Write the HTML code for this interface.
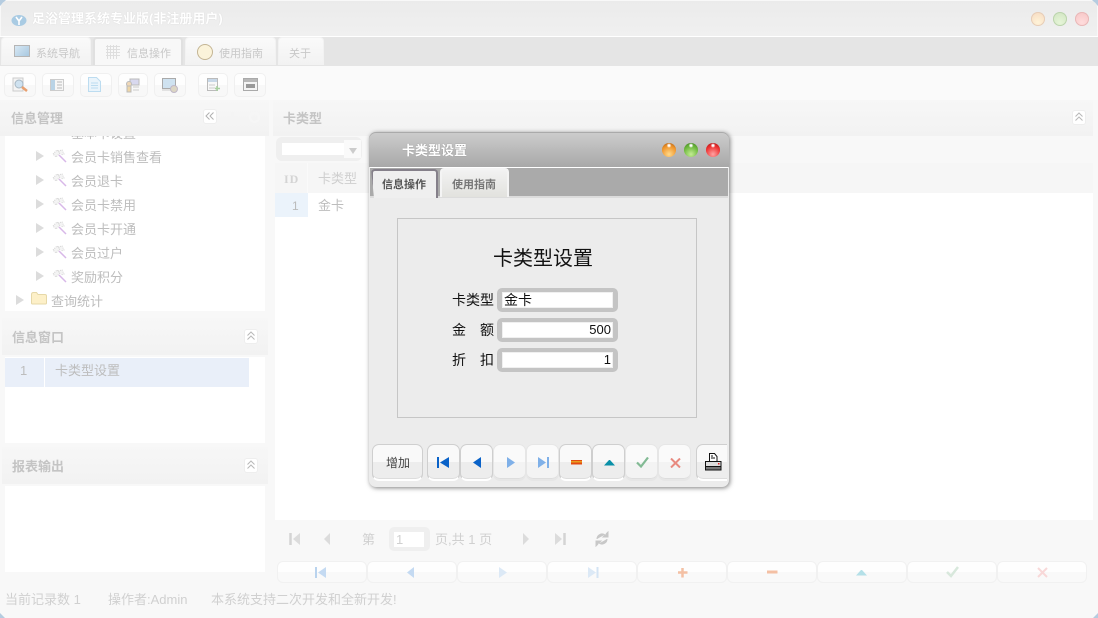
<!DOCTYPE html>
<html><head><meta charset="utf-8">
<style>
html,body{margin:0;padding:0;width:1098px;height:618px;overflow:hidden;background:#f8f8f8}
body{font-family:"Liberation Sans","WenQuanYi Zen Hei","Noto Sans CJK SC",sans-serif;font-size:13px;position:relative}
.a,.t,.btn,svg.i{position:absolute}
.t{white-space:nowrap;line-height:16px}
.tab{position:absolute;top:37px;height:28px;background:linear-gradient(#fafafa,#f2f2f2);border-radius:4px 4px 0 0;border:1px solid #f2f2f2;border-bottom:0;box-sizing:border-box}
.tb{position:absolute;top:73px;height:24px;box-sizing:border-box;border:1px solid #f0f0f0;border-radius:5px;background:linear-gradient(#fefefe 50%,#f8f8f8 50%)}
.hd{position:absolute;background:linear-gradient(#f7f7f7,#f2f2f2)}
.up{position:absolute;width:14px;height:15px;background:#fff;border:1px solid #eee;border-radius:3px;box-sizing:border-box}
.tri{position:absolute;width:0;height:0;border-left:8px solid #dcdcdc;border-top:5px solid transparent;border-bottom:5px solid transparent}
.tx{color:#bdbdbd;font-size:13px}
.btn{top:444px;height:37px;box-sizing:border-box;border:1px solid #cfcfcf;border-radius:7px;background:linear-gradient(#f9f9f9 50%,#ededed 50%);border-bottom:2px solid #fff;box-shadow:inset 0 -1px 0 #ddd}
.btn.d{background:linear-gradient(#fafafa 50%,#f3f3f3 50%);border-color:#e6e6e6}
.b2{position:absolute;top:561px;width:90px;height:22px;box-sizing:border-box;border:1px solid #f1f1f1;border-radius:6px;background:linear-gradient(#fefefe 50%,#f9f9f9 50%)}
.inp{position:absolute;left:497px;width:121px;height:24px;box-sizing:border-box;background:#c4c4c4;border-radius:5px;padding:4px 5px}
.inp div{background:#fff;height:16px;line-height:16px;font-size:13px;color:#111;box-shadow:inset 0 0 0 1px #f0f0f0;padding:0 2px;white-space:nowrap}
.dot{position:absolute;width:14px;height:14px;border-radius:50%}
</style></head><body>

<!-- window corners -->
<div class="a" style="left:0;top:0;width:6px;height:6px;background:#b5cce0;clip-path:polygon(0 0,100% 0,0 100%)"></div>
<div class="a" style="right:0;top:0;width:6px;height:6px;background:#b5cce0;clip-path:polygon(0 0,100% 0,100% 100%)"></div>
<div class="a" style="left:0;bottom:0;width:5px;height:5px;background:#b5cce0;clip-path:polygon(0 0,100% 100%,0 100%)"></div>
<div class="a" style="right:0;bottom:0;width:5px;height:5px;background:#b5cce0;clip-path:polygon(100% 0,100% 100%,0 100%)"></div>

<!-- title bar -->
<div class="a" style="left:1px;top:1px;width:1096px;height:35px;background:linear-gradient(#ebebeb,#f0f0f0);border-radius:6px 6px 0 0"></div>
<div class="a" style="left:0;top:36px;width:1098px;height:1px;background:#fff"></div>
<svg class="i" style="left:10px;top:13px" width="18" height="14"><ellipse cx="9" cy="7.500" rx="7.500" ry="5.500" fill="#a9cbe3"/><path d="M6 4l3 4 3-4M9 8v4" stroke="#fff" stroke-width="1.600" fill="none"/></svg>
<div class="t" style="left:32px;top:11px;color:#fff;font-weight:bold;font-size:13px;text-shadow:0 0 1px #ccc">足浴管理系统专业版(非注册用户)</div>
<div class="dot" style="left:1031px;top:12px;background:radial-gradient(circle at 50% 75%,#fff3d8,#f5d9c0);box-shadow:inset 0 0 0 1px #e6cdb8"></div>
<div class="dot" style="left:1053px;top:12px;background:radial-gradient(circle at 50% 75%,#e6f5d8,#cfe3c0);box-shadow:inset 0 0 0 1px #bcd4ae"></div>
<div class="dot" style="left:1075px;top:12px;background:radial-gradient(circle at 50% 75%,#ffdcdc,#f5c4c4);box-shadow:inset 0 0 0 1px #e8b8b8"></div>

<!-- tab strip -->
<div class="a" style="left:0;top:37px;width:1098px;height:29px;background:#e5e5e5"></div>
<div class="tab" style="left:1px;width:90px"></div>
<div class="tab" style="left:93px;width:90px;border:2px solid #e0e0e0;border-bottom:0;background:#f8f8f8"></div>
<div class="tab" style="left:185px;width:91px"></div>
<div class="tab" style="left:278px;width:46px"></div>
<div class="a" style="left:14px;top:45px;width:14px;height:10px;background:linear-gradient(135deg,#d8e8f4,#a8c8e0);border:1px solid #b5b5b5"></div>
<div class="t" style="left:36px;top:46px;font-size:11px;color:#c8c8c8">系统导航</div>
<svg class="i" style="left:106px;top:45px" width="14" height="14"><path d="M0 1.500h14M0 4.500h14M0 7.500h14M0 10.500h14M1.500 0v14M4.500 0v14M7.500 0v14M10.500 0v14" stroke="#dedede" stroke-width="1"/></svg>
<div class="t" style="left:127px;top:46px;font-size:11px;color:#c8c8c8">信息操作</div>
<div class="a" style="left:197px;top:44px;width:16px;height:16px;border-radius:50%;background:#fbf3da;border:1px solid #c4b594;box-sizing:border-box"></div>
<div class="t" style="left:219px;top:46px;font-size:11px;color:#c8c8c8">使用指南</div>
<div class="t" style="left:289px;top:46px;font-size:11px;color:#c8c8c8">关于</div>

<!-- toolbar -->
<div class="a" style="left:0;top:66px;width:1098px;height:34px;background:#fafafa"></div>
<div class="tb" style="left:4px;width:32px"></div>
<div class="tb" style="left:42px;width:32px"></div>
<div class="tb" style="left:80px;width:32px"></div>
<div class="tb" style="left:118px;width:30px"></div>
<div class="tb" style="left:154px;width:32px"></div>
<div class="tb" style="left:198px;width:30px"></div>
<div class="tb" style="left:234px;width:32px"></div>
<svg class="i" style="left:12px;top:77px" width="16" height="16"><rect x="1" y="1" width="10" height="13" fill="#f4f4f4" stroke="#ccc"/><circle cx="7" cy="7" r="4" fill="#cfe2f0" stroke="#a8b8c4"/><path d="M10 10l5 4" stroke="#e8a070" stroke-width="2.500"/></svg>
<svg class="i" style="left:50px;top:79px" width="14" height="12"><rect x=".5" y=".5" width="13" height="11" fill="#f6f6f6" stroke="#ccc"/><rect x="1" y="1" width="4" height="10" fill="#b9d3e6"/><path d="M7 3h5M7 6h5M7 9h5" stroke="#bbb"/></svg>
<svg class="i" style="left:88px;top:77px" width="13" height="15"><path d="M.5.500h8l4 4v10H.5z" fill="#eaf4fb" stroke="#bcdcf0"/><path d="M3 6h7M3 8.500h7M3 11h7" stroke="#bcdcf0"/></svg>
<svg class="i" style="left:125px;top:78px" width="15" height="15"><rect x="5" y="1" width="9" height="6" fill="#d8d8ee" stroke="#bbb"/><circle cx="4" cy="6" r="2.500" fill="#f0d8b8" stroke="#bbb"/><rect x="2" y="8" width="4" height="6" fill="#eed6a8" stroke="#bbb"/><path d="M8 9h6M8 12h6" stroke="#ccc"/></svg>
<svg class="i" style="left:162px;top:78px" width="16" height="15"><rect x=".5" y=".5" width="13" height="10" fill="#cfe2f0" stroke="#aaa"/><path d="M0 12h12" stroke="#ccc"/><circle cx="12" cy="11" r="3.500" fill="#dcd6c4" stroke="#c0b8c8"/></svg>
<svg class="i" style="left:207px;top:78px" width="13" height="14"><rect x=".5" y=".5" width="10" height="12" fill="#f8f8f8" stroke="#bbb"/><rect x="1" y="1" width="9" height="3" fill="#c8d8e8"/><path d="M2 7h6M2 10h6" stroke="#ccc"/><path d="M10 8v5M8 10.500h5" stroke="#a8d0a0" stroke-width="1.500"/></svg>
<svg class="i" style="left:243px;top:78px" width="15" height="13"><rect x=".5" y=".5" width="14" height="12" fill="#f4f4f4" stroke="#aaa"/><rect x="1" y="1" width="13" height="3" fill="#b8b8b8"/><rect x="3" y="6" width="9" height="4" fill="#999"/></svg>

<!-- left column -->
<div class="hd" style="left:0;top:100px;width:269px;height:36px"></div>
<div class="t" style="left:11px;top:111px;font-size:13px;font-weight:bold;color:#c4c4c4">信息管理</div>
<div class="up" style="left:203px;top:109px"></div>
<svg class="i" style="left:205px;top:112px" width="10" height="8"><path d="M4.500 .5L1 4l3.500 3.500M8.500 .5L5 4l3.500 3.500" stroke="#b0b0b0" fill="none"/></svg>
<svg class="i" style="left:226px;top:111px" width="13" height="13"><path d="M6.500 1v11M1 6.500h11" stroke="#f4f4f4" stroke-width="3"/></svg>
<div class="a" style="left:249px;top:112px;width:7px;height:7px;border:2px solid #f6f6f6;border-radius:50%"></div>

<div class="a" style="left:5px;top:136px;width:260px;height:175px;background:#fff;overflow:hidden">
<div class="t tx" style="left:66px;top:-10px">基本卡设置</div>
<div class="tri" style="left:31px;top:15px"></div><div class="t tx" style="left:66px;top:14px">会员卡销售查看</div>
<div class="tri" style="left:31px;top:39px"></div><div class="t tx" style="left:66px;top:38px">会员退卡</div>
<div class="tri" style="left:31px;top:63px"></div><div class="t tx" style="left:66px;top:62px">会员卡禁用</div>
<div class="tri" style="left:31px;top:87px"></div><div class="t tx" style="left:66px;top:86px">会员卡开通</div>
<div class="tri" style="left:31px;top:111px"></div><div class="t tx" style="left:66px;top:110px">会员过户</div>
<div class="tri" style="left:31px;top:135px"></div><div class="t tx" style="left:66px;top:134px">奖励积分</div>
<div class="tri" style="left:11px;top:159px"></div>
<svg class="i" style="left:26px;top:156px" width="16" height="13"><path d="M.5 2.500q0-2 2-2h3l1.500 2h7q1.500 0 1.500 1.500v7q0 1-1 1H1.500q-1 0-1-1z" fill="#fdf0c8" stroke="#e6d8a8"/></svg>
<div class="t tx" style="left:46px;top:158px">查询统计</div>
<svg class="i" style="left:47px;top:13px" width="15" height="14"><path d="M1 5l4-4 3 3-4 4zM6 2l4-1 2 4-3 1" fill="#f4f4f4" stroke="#d4d4d4" stroke-dasharray="1 1"/><path d="M7 6l7 7" stroke="#d8b8e8" stroke-width="1.500"/></svg>
<svg class="i" style="left:47px;top:37px" width="15" height="14"><path d="M1 5l4-4 3 3-4 4zM6 2l4-1 2 4-3 1" fill="#f4f4f4" stroke="#d4d4d4" stroke-dasharray="1 1"/><path d="M7 6l7 7" stroke="#d8b8e8" stroke-width="1.500"/></svg>
<svg class="i" style="left:47px;top:61px" width="15" height="14"><path d="M1 5l4-4 3 3-4 4zM6 2l4-1 2 4-3 1" fill="#f4f4f4" stroke="#d4d4d4" stroke-dasharray="1 1"/><path d="M7 6l7 7" stroke="#d8b8e8" stroke-width="1.500"/></svg>
<svg class="i" style="left:47px;top:85px" width="15" height="14"><path d="M1 5l4-4 3 3-4 4zM6 2l4-1 2 4-3 1" fill="#f4f4f4" stroke="#d4d4d4" stroke-dasharray="1 1"/><path d="M7 6l7 7" stroke="#d8b8e8" stroke-width="1.500"/></svg>
<svg class="i" style="left:47px;top:109px" width="15" height="14"><path d="M1 5l4-4 3 3-4 4zM6 2l4-1 2 4-3 1" fill="#f4f4f4" stroke="#d4d4d4" stroke-dasharray="1 1"/><path d="M7 6l7 7" stroke="#d8b8e8" stroke-width="1.500"/></svg>
<svg class="i" style="left:47px;top:133px" width="15" height="14"><path d="M1 5l4-4 3 3-4 4zM6 2l4-1 2 4-3 1" fill="#f4f4f4" stroke="#d4d4d4" stroke-dasharray="1 1"/><path d="M7 6l7 7" stroke="#d8b8e8" stroke-width="1.500"/></svg>
</div>

<div class="hd" style="left:2px;top:318px;width:266px;height:37px"></div>
<div class="t" style="left:12px;top:330px;font-size:13px;font-weight:bold;color:#c4c4c4">信息窗口</div>
<div class="up" style="left:244px;top:329px"></div>
<svg class="i" style="left:246px;top:331px" width="10" height="10"><path d="M1.500 4.500L5 1l3.500 3.500M1.500 8.500L5 5l3.500 3.500" stroke="#b8b8b8" fill="none"/></svg>
<div class="a" style="left:5px;top:357px;width:260px;height:86px;background:#fff"></div>
<div class="a" style="left:5px;top:358px;width:39px;height:29px;background:#e9eff9"></div>
<div class="a" style="left:45px;top:358px;width:204px;height:29px;background:#e9eff9"></div>
<div class="t tx" style="left:20px;top:363px">1</div>
<div class="t tx" style="left:55px;top:363px">卡类型设置</div>

<div class="hd" style="left:2px;top:447px;width:266px;height:37px"></div>
<div class="t" style="left:12px;top:459px;font-size:13px;font-weight:bold;color:#c4c4c4">报表输出</div>
<div class="up" style="left:244px;top:458px"></div>
<svg class="i" style="left:246px;top:460px" width="10" height="10"><path d="M1.500 4.500L5 1l3.500 3.500M1.500 8.500L5 5l3.500 3.500" stroke="#b8b8b8" fill="none"/></svg>
<div class="a" style="left:5px;top:486px;width:260px;height:86px;background:#fff"></div>

<!-- status -->
<div class="t" style="left:5px;top:592px;color:#d0d0d0">当前记录数 1</div>
<div class="t" style="left:108px;top:592px;color:#d0d0d0">操作者:Admin</div>
<div class="t" style="left:211px;top:592px;color:#d0d0d0">本系统支持二次开发和全新开发!</div>

<!-- right column -->
<div class="hd" style="left:273px;top:100px;width:820px;height:36px"></div>
<div class="t" style="left:283px;top:111px;font-size:13px;font-weight:bold;color:#c4c4c4">卡类型</div>
<div class="up" style="left:1072px;top:110px"></div>
<svg class="i" style="left:1074px;top:112px" width="10" height="10"><path d="M1.500 4.500L5 1l3.500 3.500M1.500 8.500L5 5l3.500 3.500" stroke="#b8b8b8" fill="none"/></svg>
<div class="a" style="left:276px;top:137px;width:86px;height:24px;background:#efefef;border-radius:6px"></div>
<div class="a" style="left:282px;top:143px;width:62px;height:12px;background:#fff"></div>
<div class="a" style="left:344px;top:140px;width:17px;height:18px;background:#fafafa"></div>
<div class="a" style="left:349px;top:148px;border-top:6px solid #ccc;border-left:4px solid transparent;border-right:4px solid transparent"></div>
<div class="a" style="left:275px;top:163px;width:818px;height:30px;background:#f6f6f6"></div>
<div class="a" style="left:307px;top:163px;width:1px;height:30px;background:#fafafa"></div>
<div class="t" style="left:284px;top:171px;font-family:'Liberation Serif',serif;font-weight:bold;font-size:12px;letter-spacing:1px;color:#d4d4d4">ID</div>
<div class="t" style="left:318px;top:171px;font-size:13px;color:#cfcfcf">卡类型</div>
<div class="a" style="left:275px;top:193px;width:818px;height:327px;background:#fff"></div>
<div class="a" style="left:275px;top:193px;width:33px;height:24px;background:#ebf3fb"></div>
<div class="t" style="left:292px;top:198px;font-size:12px;color:#bbb">1</div>
<div class="t tx" style="left:318px;top:198px">金卡</div>

<!-- pager -->
<svg class="i" style="left:289px;top:532px" width="14" height="14"><path d="M1.500 1v12" stroke="#d4d4d4" stroke-width="2.500"/><path d="M11 1v12L4 7z" fill="#dcdcdc"/></svg>
<svg class="i" style="left:322px;top:532px" width="10" height="14"><path d="M8 1v12L2 7z" fill="#dcdcdc"/></svg>
<div class="t" style="left:362px;top:532px;color:#d0d0d0">第</div>
<div class="a" style="left:389px;top:527px;width:41px;height:24px;background:#efefef;border-radius:5px"></div>
<div class="a" style="left:394px;top:532px;width:30px;height:15px;background:#fff;color:#d0d0d0;font-size:13px;line-height:15px;padding-left:2px;box-sizing:border-box">1</div>
<div class="t" style="left:435px;top:532px;color:#d0d0d0">页,共 1 页</div>
<svg class="i" style="left:521px;top:532px" width="10" height="14"><path d="M2 1v12l6-6z" fill="#dcdcdc"/></svg>
<svg class="i" style="left:553px;top:532px" width="14" height="14"><path d="M2 1v12l7-6z" fill="#dcdcdc"/><path d="M11.500 1v12" stroke="#d4d4d4" stroke-width="2.500"/></svg>
<svg class="i" style="left:594px;top:531px" width="16" height="16"><path d="M3 8a5 5 0 0 1 8-4l-2 2h5V1l-2 2M13 8a5 5 0 0 1-8 4l2-2H2v5l2-2" fill="#c8c8c8" stroke="#c8c8c8"/></svg>

<div class="b2" style="left:277px"></div><div class="b2" style="left:367px"></div><div class="b2" style="left:457px"></div><div class="b2" style="left:547px"></div><div class="b2" style="left:637px"></div><div class="b2" style="left:727px"></div><div class="b2" style="left:817px"></div><div class="b2" style="left:907px"></div><div class="b2" style="left:997px"></div>
<svg class="i" style="left:315px;top:567px" width="12" height="11"><path d="M1 0v11" stroke="#b9d3ee" stroke-width="2"/><path d="M11 0v11L3 5.500z" fill="#c4daf2"/></svg>
<svg class="i" style="left:406px;top:567px" width="10" height="11"><path d="M8 0v11L1 5.500z" fill="#c4daf2"/></svg>
<svg class="i" style="left:498px;top:567px" width="10" height="11"><path d="M1 0v11l8-5.500z" fill="#dce9f6"/></svg>
<svg class="i" style="left:587px;top:567px" width="12" height="11"><path d="M1 0v11l8-5.500z" fill="#dce9f6"/><path d="M10.500 0v11" stroke="#d4e4f4" stroke-width="2"/></svg>
<svg class="i" style="left:677px;top:567px" width="11" height="11"><path d="M5.500 1v9.500M1 5.500h9.500" stroke="#f4c0a4" stroke-width="2.500"/></svg>
<svg class="i" style="left:767px;top:570px" width="11" height="4"><path d="M0 2h10.500" stroke="#f4c0a4" stroke-width="3"/></svg>
<svg class="i" style="left:856px;top:569px" width="12" height="7"><path d="M0 6.500L5 1h1l5 5.500z" fill="#b4e0e8"/></svg>
<svg class="i" style="left:946px;top:566px" width="13" height="12"><path d="M1 6l4 4 7-9" stroke="#d8e8dc" stroke-width="2.500" fill="none"/></svg>
<svg class="i" style="left:1037px;top:567px" width="11" height="11"><path d="M1 1l9 9M10 1l-9 9" stroke="#f8d8d8" stroke-width="2"/></svg>

<!-- dialog -->
<div class="a" style="left:369px;top:132px;width:360px;height:355px;border-radius:7px;background:#ececec;box-shadow:1px 1px 5px rgba(0,0,0,.5)"></div>
<div class="a" style="left:369px;top:132px;width:360px;height:35px;border-radius:7px 7px 0 0;background:linear-gradient(#cdcdcd,#a8a8a8);box-shadow:inset 0 1px 0 #aaa"></div>
<div class="t" style="left:402px;top:143px;color:#fff;font-weight:bold;font-size:13px;text-shadow:0 0 1px #888">卡类型设置</div>
<div class="dot" style="left:662px;top:143px;background:radial-gradient(circle at 50% 18%,#fff 0,#fff 6%,transparent 18%),radial-gradient(circle at 50% 80%,#ffd98a,#f0962c 60%,#a85a14)"></div>
<div class="dot" style="left:684px;top:143px;background:radial-gradient(circle at 50% 18%,#fff 0,#fff 6%,transparent 18%),radial-gradient(circle at 50% 80%,#c4ec94,#6cb83c 60%,#3f7a22)"></div>
<div class="dot" style="left:706px;top:143px;background:radial-gradient(circle at 50% 18%,#fff 0,#fff 6%,transparent 18%),radial-gradient(circle at 50% 80%,#ffa4a4,#ee3030 60%,#a01414)"></div>

<div class="a" style="left:370px;top:167px;width:358px;height:1px;background:#fff"></div>
<div class="a" style="left:370px;top:168px;width:358px;height:29px;background:#aaaaaa"></div>
<div class="a" style="left:370px;top:196px;width:358px;height:2px;background:#dcdcdc"></div>
<div class="a" style="left:371px;top:169px;width:67px;height:29px;box-sizing:border-box;background:#efefef;border-top:2px solid #85808a;border-left:2px solid #85808a;border-right:2px solid #85808a;border-radius:4px 4px 0 0;clip-path:polygon(0 0,100% 0,100% 100%,3px 100%)"></div>
<div class="t" style="left:382px;top:177px;font-size:11px;font-weight:bold;color:#555">信息操作</div>
<div class="a" style="left:440px;top:168px;width:69px;height:29px;box-sizing:border-box;background:linear-gradient(#f2f2f2,#e2e2de);border:2px solid #f4f4f4;border-bottom:0;border-radius:4px 4px 0 0"></div>
<div class="t" style="left:452px;top:177px;font-size:11px;font-weight:bold;color:#777">使用指南</div>

<div class="a" style="left:397px;top:218px;width:300px;height:200px;box-sizing:border-box;border:1px solid #c6c6c6"></div>
<div class="t" style="left:493px;top:248px;font-size:20px;line-height:22px;color:#111">卡类型设置</div>
<div class="t" style="left:452px;top:292px;font-size:14px;color:#111">卡类型</div>
<div class="t" style="left:452px;top:322px;font-size:14px;color:#111">金</div><div class="t" style="left:480px;top:322px;font-size:14px;color:#111">额</div>
<div class="t" style="left:452px;top:352px;font-size:14px;color:#111">折</div><div class="t" style="left:480px;top:352px;font-size:14px;color:#111">扣</div>
<div class="inp" style="top:288px"><div style="font-size:14px">金卡</div></div>
<div class="inp" style="top:318px"><div style="text-align:right">500</div></div>
<div class="inp" style="top:348px"><div style="text-align:right">1</div></div>

<div class="btn" style="left:372px;width:51px"></div>
<div class="t" style="left:386px;top:455px;font-size:12px;color:#444">增加</div>
<div class="btn" style="left:427px;width:33px"></div>
<div class="btn" style="left:460px;width:33px"></div>
<div class="btn d" style="left:493px;width:33px"></div>
<div class="btn d" style="left:526px;width:33px"></div>
<div class="btn" style="left:559px;width:33px"></div>
<div class="btn" style="left:592px;width:33px"></div>
<div class="btn d" style="left:625px;width:33px"></div>
<div class="btn d" style="left:658px;width:33px"></div>
<div class="btn" style="left:696px;width:31px;border-right:0;border-radius:7px 0 0 7px"></div>
<svg class="i" style="left:437px;top:457px" width="13" height="11"><path d="M1 0v11" stroke="#0a62c8" stroke-width="2"/><path d="M12 0v11L3 5.500z" fill="#0a62c8"/></svg>
<svg class="i" style="left:472px;top:457px" width="10" height="11"><path d="M9 0v11L1 5.500z" fill="#0a62c8"/></svg>
<svg class="i" style="left:506px;top:457px" width="10" height="11"><path d="M1 0v11l8-5.500z" fill="#7fb0e8"/></svg>
<svg class="i" style="left:537px;top:457px" width="13" height="11"><path d="M1 0v11l8-5.500z" fill="#7fb0e8"/><path d="M11 0v11" stroke="#7fb0e8" stroke-width="2"/></svg>
<svg class="i" style="left:571px;top:460px" width="11" height="5"><rect width="11" height="4.500" fill="#e24a10"/><rect y="1" width="11" height="1.500" fill="#e8a020"/></svg>
<svg class="i" style="left:604px;top:459px" width="11" height="7"><path d="M0 6.500L5 1h1l5 5.500z" fill="#0a90a8"/></svg>
<svg class="i" style="left:636px;top:457px" width="13" height="11"><path d="M1 5.500l4 4 7-9" stroke="#82ba94" stroke-width="2.200" fill="none"/></svg>
<svg class="i" style="left:670px;top:458px" width="11" height="10"><path d="M1 .5l9 9M10 .5l-9 9" stroke="#e88a80" stroke-width="2"/></svg>
<svg class="i" style="left:705px;top:453px" width="17" height="18"><path d="M4.500.5h5l2.500 3v5h-7.500z" fill="#fff" stroke="#111"/><path d="M6 3h2M6 5h4" stroke="#111"/><rect x=".5" y="8.500" width="15.500" height="5" fill="#ddd" stroke="#111"/><rect x=".5" y="13.500" width="15.500" height="3.500" fill="#777" stroke="#111"/><rect x="13" y="10" width="1.500" height="1.500" fill="#e02020"/></svg>
</body></html>
